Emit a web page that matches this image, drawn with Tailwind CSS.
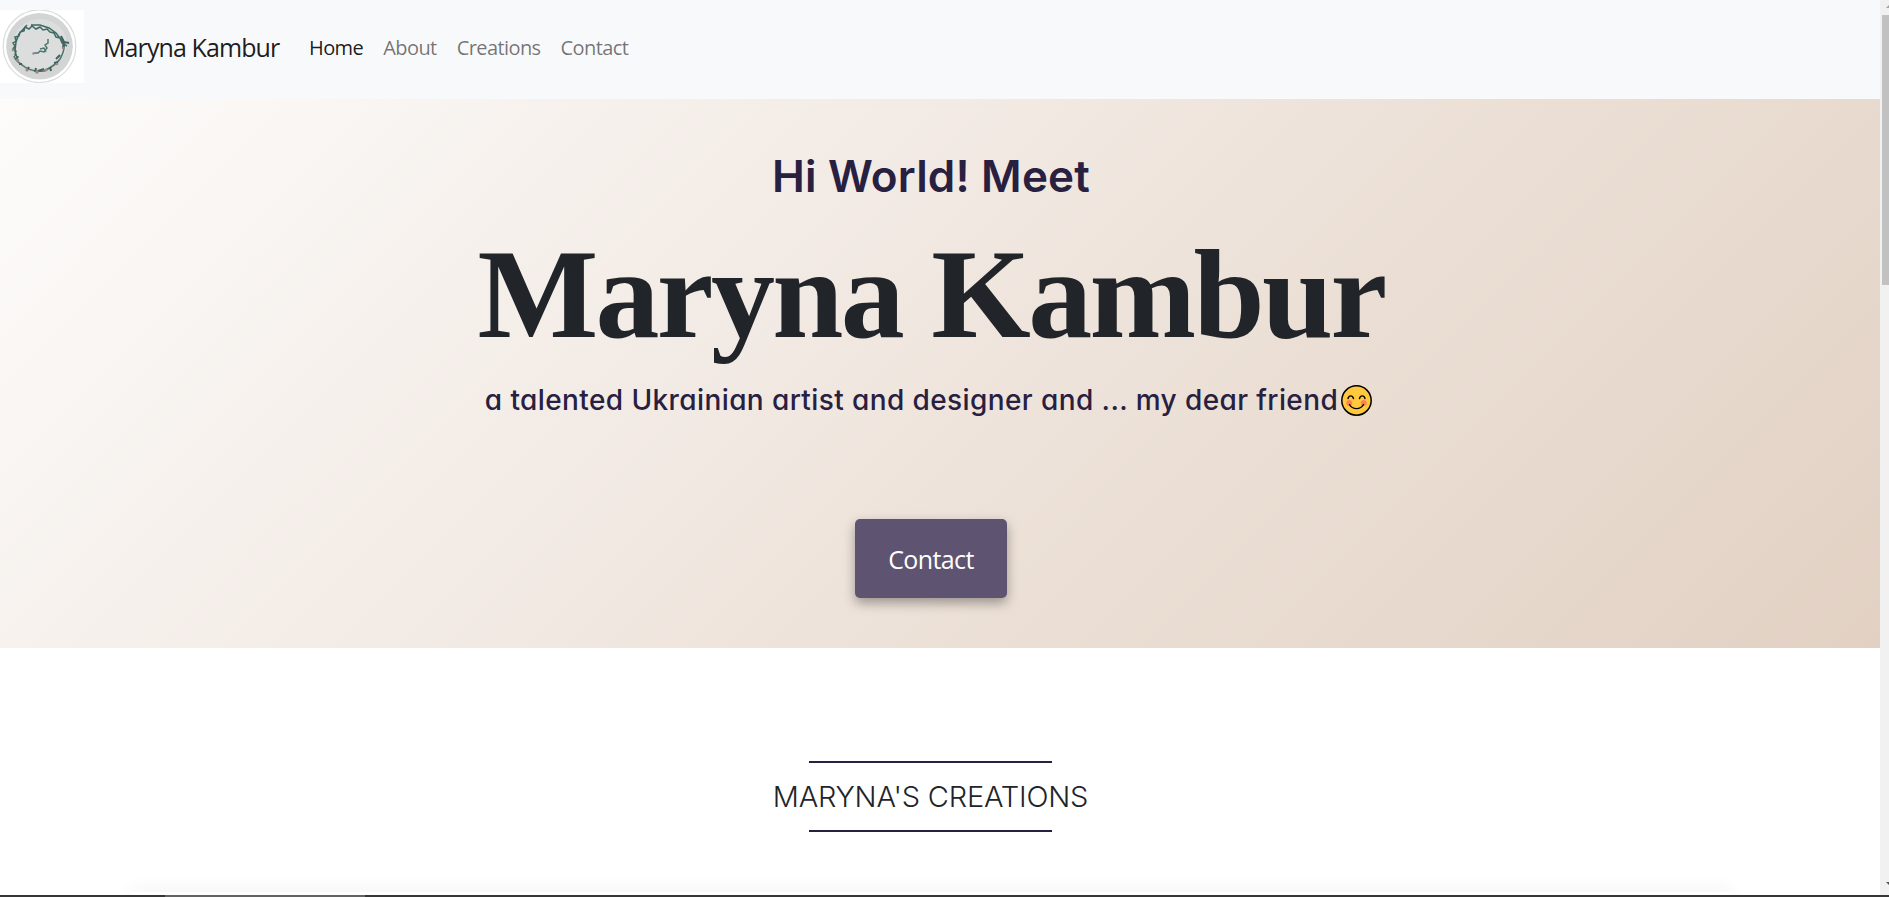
<!DOCTYPE html>
<html lang="en">
<head>
<meta charset="utf-8">
<title>Maryna Kambur</title>
<script src="https://cdn.jsdelivr.net/npm/@tailwindcss/browser@4"></script>
</head>
<body class="h-[897px] overflow-hidden bg-white font-['Open_Sans',sans-serif] text-[#212529]">
<div class="flex h-[895px] overflow-hidden">
  <div class="w-[1880px] shrink-0 flex flex-col">
    <nav class="h-[99px] shrink-0 bg-[#f8f9fa] flex items-start pt-[10px]">
      <svg class="w-[84px] h-[73px] shrink-0" viewBox="0 0 84 73">
        <rect width="84" height="73" fill="#fff"/>
        <circle cx="39.500" cy="36.200" r="36.300" fill="#fff" stroke="#dcdedd" stroke-width="1.200"/>
        <circle cx="39.500" cy="36.200" r="33.300" fill="#d3d5d4"/>
        <ellipse cx="40" cy="34" rx="27" ry="25" fill="#dcdddd"/>
        <path d="M64 32C65 38 63 44 60 49C56 55 50 58 44 61C36 62 28 60 22 55C18 52 15 50 14 46" fill="none" stroke="#4f746e" stroke-width="1.600"/>
        <path d="M16 50l2-3l-3-2l1-4l-3-2l2-3l-2-3l3-2l-1-4l4-1l1-4l4-1l1-4l4 2l3-3l4 3l4-2l3 3l4-1l3 3l4 1l2 4l4 1l2 5l5 3M17 48l-2-7l1-9l3-8l8-9M31 15h9l9 3l7 5l7 9" fill="none" stroke="#3f6a64" stroke-width="1.500"/>
        <path d="M61 26l3 6l5 1M64 32l-1 5M60 45l-4 4M58 52l-4 1M50 57l1 4M44 59l-6 2M36 58l-1 4M29 57l-2 3M22 54l-3 0" fill="none" stroke="#42625f" stroke-width="2"/>
        <path d="M34 43h4l2-2l4 1l3-4l-2-3l3-2v-4M40 39l4-1l2 4" fill="none" stroke="#4f7770" stroke-width="1.500"/>
        <g fill="#a58482"><circle cx="17.500" cy="50.500" r="1.700"/><circle cx="27" cy="60" r="1.600"/><circle cx="37" cy="62" r="1.800"/><circle cx="46" cy="60" r="1.500"/><circle cx="57" cy="54" r="1.300"/><circle cx="13" cy="40" r="1.300"/><circle cx="63" cy="38" r="1.300"/><circle cx="33.500" cy="43.500" r="1.200"/></g>
      </svg>
      <a class="ml-[19px] text-[25px] leading-[75px] tracking-[-0.9px] font-normal text-black/90 whitespace-nowrap w-[195px]">Maryna Kambur</a>
      <div class="ml-[11px] flex gap-[20px] text-[20px] leading-[75px] tracking-[-0.58px] font-normal text-black/55">
        <a class="text-black/90">Home</a><a>About</a><a>Creations</a><a>Contact</a>
      </div>
    </nav>
    <header class="h-[549px] shrink-0 bg-[linear-gradient(135deg,#fdfcfb_0%,#f2eae4_40%,#ebdfd5_64%,#e2d1c3_100%)]">
      <div class="w-[1862px] pt-[47px] flex flex-col items-center font-['Inter',sans-serif] text-[#282041] whitespace-nowrap [font-feature-settings:'cv11']">
        <h2 class="text-[44px] leading-[60px] tracking-[0.2px] font-semibold">Hi World! Meet</h2>
        <h1 class="mt-[11px] text-[128px] leading-[154px] tracking-[-2.7px] font-bold font-['Liberation_Serif',serif] text-[#212529]">Maryna Kambur</h1>
        <p class="mt-2 mr-[5px] flex items-center text-[28px] leading-[42px] tracking-[0.4px] font-medium">a talented Ukrainian artist and designer and ... my dear friend
          <svg class="ml-[3px] w-[31px] h-[31px]" viewBox="0 0 31 31"><circle cx="15.500" cy="15.500" r="14.700" fill="#ffc83d" stroke="#000" stroke-width="1.500"/><circle cx="8.300" cy="18" r="3" fill="#ff8257"/><circle cx="22.700" cy="18" r="3" fill="#ff8257"/><path d="M7 13.500c1-3.500 4.500-3.500 5.500 0M18.500 13.500c1-3.500 4.500-3.500 5.500 0M8.500 19.500c3 5.500 11 5.500 14 0" fill="none" stroke="#000" stroke-width="1.400" stroke-linecap="round"/></svg></p>
        <a class="mt-[98px] w-[152px] h-[79px] rounded-[5px] bg-[#5e5370] text-white text-center font-['Open_Sans',sans-serif] text-[25px] leading-[80px] tracking-[-0.6px] shadow-[0_5px_12px_rgba(0,0,0,0.35)]">Contact</a>
      </div>
    </header>
    <main class="w-[1861px] pt-[113px] flex flex-col items-center">
      <div class="w-[243px] h-[2px] shrink-0 bg-[#282041]"></div>
      <h3 class="font-['Inter',sans-serif] font-[340] text-[29px] leading-[67px] tracking-[-0.2px] whitespace-nowrap">MARYNA'S CREATIONS</h3>
      <div class="w-[243px] h-[2px] shrink-0 bg-[#282041]"></div>
      <div class="mt-[60px] h-[10px] w-[1600px] shrink-0 bg-white shadow-[0_0_20px_rgba(0,0,0,0.08)]"></div>
    </main>
  </div>
  <aside class="w-[9px] shrink-0 bg-[#f1f1f1] flex flex-col justify-between overflow-hidden">
    <div class="h-[285px] flex flex-col">
      <svg class="h-[15px] w-[9px]" viewBox="0 0 9 15"><path d="M6 8l3-3v3z" fill="#a3a3a3"/></svg>
      <div class="ml-[2px] h-[270px] bg-[#c1c1c1]"></div>
    </div>
    <svg class="h-[15px] w-[9px]" viewBox="0 0 9 15"><path d="M6 2h3v3z" fill="#505050"/></svg>
  </aside>
</div>
<div class="h-[2px] bg-[#363636] flex"><div class="ml-[165px] w-[200px] bg-[#636363]"></div></div>
</body>
</html>
